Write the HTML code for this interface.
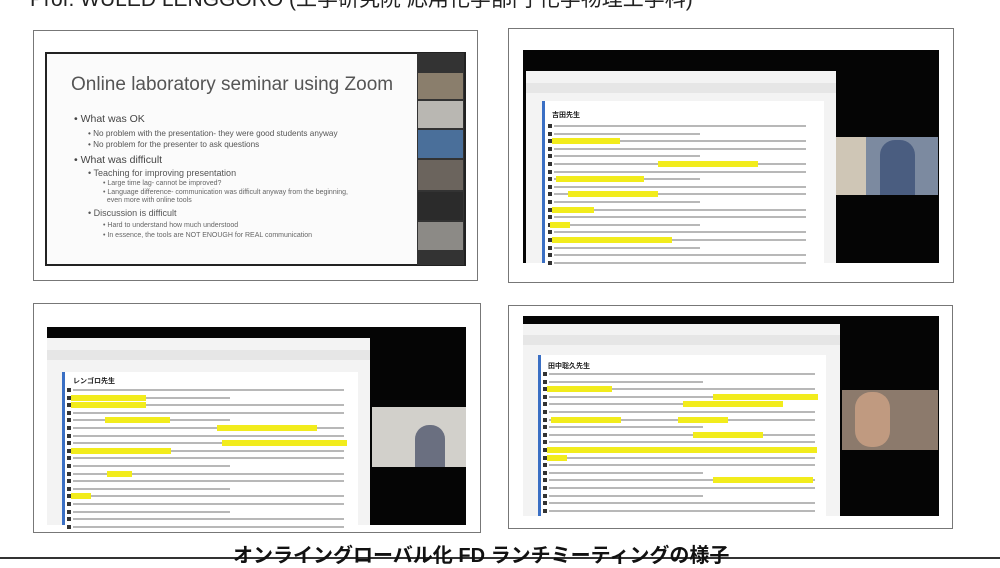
<!DOCTYPE html>
<html><head><meta charset="utf-8"><style>
*{margin:0;padding:0;box-sizing:border-box}
body{width:1000px;height:561px;overflow:hidden;background:#fff;position:relative;font-family:"Liberation Sans","Noto Sans CJK JP",sans-serif}
.a{position:absolute}
.frame{position:absolute;border:1.5px solid #777;background:#fff}
.ln{position:absolute;height:2px;background:#b8b8b8}
.hl{position:absolute;height:6px;background:#f2ec1c}
.bul{position:absolute;width:4px;height:4px;background:#333}
</style></head><body>
<div class="a" style="left:30px;top:-17px;font-size:21px;color:#222;white-space:nowrap">Prof. WULED LENGGORO (工学研究院 応用化学部門 化学物理工学科)</div>

<!-- Panel 1 -->
<div class="frame" style="left:33px;top:30px;width:445px;height:251px"></div>
<div class="a" style="left:45px;top:52px;width:421px;height:214px;border:2px solid #222;background:#fbfbfb"></div>
<div class="a" style="left:417px;top:53px;width:47px;height:212px;background:#333"></div>
<div class="a" style="left:418px;top:73px;width:45px;height:26px;background:#8a7e6c"></div>
<div class="a" style="left:418px;top:101px;width:45px;height:27px;background:#b9b7b2"></div>
<div class="a" style="left:418px;top:130px;width:45px;height:28px;background:#4a6f9a"></div>
<div class="a" style="left:418px;top:160px;width:45px;height:30px;background:#6b645d"></div>
<div class="a" style="left:418px;top:192px;width:45px;height:28px;background:#2b2b2b"></div>
<div class="a" style="left:418px;top:222px;width:45px;height:28px;background:#8c8a86"></div>
<div class="a" style="left:71px;top:74px;font-size:19px;color:#555">Online laboratory seminar using Zoom</div>
<div class="a" style="left:74px;top:114px;font-size:10.5px;color:#444;line-height:11px">• What was OK</div>
<div class="a" style="left:88px;top:128px;font-size:8.2px;color:#555;line-height:11px">• No problem with the presentation- they were good students anyway<br>• No problem for the presenter to ask questions</div>
<div class="a" style="left:74px;top:154px;font-size:10.5px;color:#444">• What was difficult</div>
<div class="a" style="left:88px;top:168px;font-size:9px;color:#555">• Teaching for improving presentation</div>
<div class="a" style="left:103px;top:180px;font-size:7px;color:#666;line-height:8.5px">• Large time lag- cannot be improved?<br>• Language difference- communication was difficult anyway from the beginning,<br>&nbsp;&nbsp;even more with online tools</div>
<div class="a" style="left:88px;top:208px;font-size:9px;color:#555">• Discussion is difficult</div>
<div class="a" style="left:103px;top:221px;font-size:7px;color:#666;line-height:9.5px">• Hard to understand how much understood<br>• In essence, the tools are NOT ENOUGH for REAL communication</div>

<!-- Panel 2 -->
<div class="frame" style="left:508px;top:28px;width:446px;height:255px"></div>
<div class="a" style="left:523px;top:50px;width:416px;height:213px;background:#050505"></div>
<div class="a" style="left:526px;top:71px;width:310px;height:192px;background:#f3f3f3"></div>
<div class="a" style="left:526px;top:83px;width:310px;height:10px;background:#e6e6e6"></div>
<div class="a" style="left:542px;top:101px;width:282px;height:162px;background:#fff;border-left:3px solid #3a6fc4"></div>
<div class="a" style="left:836px;top:137px;width:102px;height:58px;background:#7c8aa0"></div>
<div class="a" style="left:836px;top:137px;width:30px;height:58px;background:#cfc6b6"></div>
<div class="a" style="left:880px;top:140px;width:35px;height:55px;background:#4a5d80;border-radius:15px 15px 0 0"></div>
<div class="a" style="left:552px;top:110px;font-size:7px;font-weight:bold;color:#222">吉田先生</div>

<!-- Panel 3 -->
<div class="frame" style="left:33px;top:303px;width:448px;height:230px"></div>
<div class="a" style="left:47px;top:327px;width:419px;height:198px;background:#050505"></div>
<div class="a" style="left:47px;top:338px;width:323px;height:187px;background:#f3f3f3"></div>
<div class="a" style="left:47px;top:350px;width:323px;height:10px;background:#e6e6e6"></div>
<div class="a" style="left:62px;top:372px;width:296px;height:153px;background:#fff;border-left:3px solid #3a6fc4"></div>
<div class="a" style="left:372px;top:407px;width:94px;height:60px;background:#d2d0cb"></div>
<div class="a" style="left:415px;top:425px;width:30px;height:42px;background:#6a6f80;border-radius:14px 14px 0 0"></div>
<div class="a" style="left:73px;top:376px;font-size:7px;font-weight:bold;color:#222">レンゴロ先生</div>

<!-- Panel 4 -->
<div class="frame" style="left:508px;top:305px;width:445px;height:224px"></div>
<div class="a" style="left:523px;top:316px;width:416px;height:200px;background:#050505"></div>
<div class="a" style="left:523px;top:324px;width:317px;height:192px;background:#f3f3f3"></div>
<div class="a" style="left:523px;top:335px;width:317px;height:10px;background:#e6e6e6"></div>
<div class="a" style="left:538px;top:355px;width:288px;height:161px;background:#fff;border-left:3px solid #3a6fc4"></div>
<div class="a" style="left:842px;top:390px;width:96px;height:60px;background:#8c7a6c"></div>
<div class="a" style="left:855px;top:392px;width:35px;height:55px;background:#c09a80;border-radius:16px"></div>
<div class="a" style="left:548px;top:361px;font-size:7px;font-weight:bold;color:#222">田中聡久先生</div>

<div id="docs"></div>
<script>
function doc(x,y,w,hls){let h='';for(let i=0;i<20;i++){let yy=y+i*7.6;if(yy>y+140)break;h+=`<div class="bul" style="left:${x}px;top:${yy}px"></div><div class="ln" style="left:${x+6}px;top:${yy+1}px;width:${w*(i%3==1?0.55:0.95)}px"></div>`;}
hls.forEach(a=>{h+=`<div class="hl" style="left:${x+a[1]}px;top:${y+a[0]*7.6-1}px;width:${a[2]}px"></div>`});return h;}
document.getElementById('docs').innerHTML=
doc(548,124,265,[[2,4,68],[5,110,100],[7,8,88],[9,20,90],[11,4,42],[13,2,20],[15,4,120]])+
doc(67,388,285,[[1,4,75],[2,4,75],[4,38,65],[5,150,100],[7,155,125],[8,4,100],[11,40,25],[14,4,20]])+
doc(543,372,280,[[2,4,65],[3,170,105],[4,140,100],[6,8,70],[6,135,50],[8,150,70],[10,4,270],[11,4,20],[14,170,100]]);
</script>

<div class="a" style="left:0;top:557px;width:1000px;height:1.5px;background:#333"></div>
<div class="a" style="left:233px;top:539px;font-size:20px;font-weight:bold;color:#111;white-space:nowrap">オンライングローバル化 FD ランチミーティングの様子</div>
</body></html>
